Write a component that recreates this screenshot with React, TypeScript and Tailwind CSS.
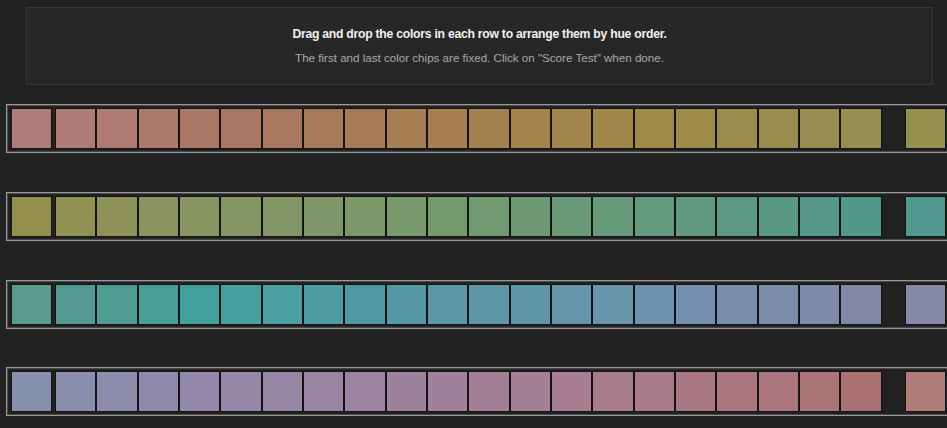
import React from "react";

type Anchor = [number, string];

function hexToRgb(h: string): [number, number, number] {
  const v = h.replace("#", "");
  return [parseInt(v.slice(0, 2), 16), parseInt(v.slice(2, 4), 16), parseInt(v.slice(4, 6), 16)];
}

function interp(anchors: Anchor[], n = 22): string[] {
  const out: string[] = [];
  for (let i = 0; i < n; i++) {
    let a = anchors[0];
    let b = anchors[anchors.length - 1];
    for (let k = 0; k < anchors.length - 1; k++) {
      if (i >= anchors[k][0] && i <= anchors[k + 1][0]) {
        a = anchors[k];
        b = anchors[k + 1];
        break;
      }
    }
    const t = b[0] === a[0] ? 0 : (i - a[0]) / (b[0] - a[0]);
    const ca = hexToRgb(a[1]);
    const cb = hexToRgb(b[1]);
    const c = ca.map((x, j) => Math.round(x + (cb[j] - x) * t));
    out.push(`rgb(${c[0]}, ${c[1]}, ${c[2]})`);
  }
  return out;
}

const rows: string[][] = [
  interp([
    [0, "#b07c7b"],
    [5, "#aa7762"],
    [10, "#a67e51"],
    [15, "#a08a48"],
    [20, "#968e52"],
    [21, "#939050"],
  ]),
  interp([
    [0, "#938f4c"],
    [3, "#8a9460"],
    [6, "#839666"],
    [10, "#749a6c"],
    [14, "#66997a"],
    [18, "#5a9886"],
    [20, "#529888"],
    [21, "#539890"],
  ]),
  interp([
    [0, "#5a9b90"],
    [1, "#539a90"],
    [4, "#44a09c"],
    [6, "#4c9ea2"],
    [8, "#5098a4"],
    [10, "#5896a8"],
    [12, "#6096a8"],
    [14, "#6894ac"],
    [16, "#7490ae"],
    [18, "#7c8cac"],
    [20, "#8088a6"],
    [21, "#8688a8"],
  ]),
  interp([
    [0, "#8890b0"],
    [1, "#8a8eae"],
    [4, "#9288aa"],
    [7, "#9a84a4"],
    [10, "#a0809a"],
    [13, "#a87e90"],
    [16, "#aa7884"],
    [19, "#aa7478"],
    [20, "#aa7272"],
    [21, "#b07c78"],
  ]),
];

function Chip({ color }: { color: string }) {
  return (
    <div
      className="w-[41.33px] h-[41px] shrink-0 border border-[#141414] box-border"
      style={{ backgroundColor: color }}
    />
  );
}

function Row({ colors }: { colors: string[] }) {
  const first = colors[0];
  const last = colors[colors.length - 1];
  const middle = colors.slice(1, -1);
  return (
    <div className="ml-[6px] w-[960px] shrink-0 border border-[#9a9a9a] shadow-[inset_0_0_0_1px_#4a4a4a] pl-[3.7px] pt-[3px] pb-[3px] flex flex-row items-start bg-[#212121]">
      <Chip color={first} />
      <div className="flex flex-row ml-[3px]">
        {middle.map((c, i) => (
          <Chip key={i} color={c} />
        ))}
      </div>
      <div className="ml-[23.4px]">
        <Chip color={last} />
      </div>
    </div>
  );
}

export default function App() {
  return (
    <div className="w-full min-h-screen overflow-hidden bg-[#222222] pt-[7px]" style={{ fontFamily: "'Liberation Sans', Arial, sans-serif" }}>
      <div className="ml-[26px] w-[907px] h-[78px] border border-[#363636] bg-[#272727] flex flex-col items-center">
        <div className="mt-[18px] text-[12.2px] leading-[16px] font-bold text-[#f2f2f2] tracking-[-0.25px]">
          Drag and drop the colors in each row to arrange them by hue order.
        </div>
        <div className="mt-[8px] text-[11.6px] leading-[16px] text-[#a9a9a9]">
          The first and last color chips are fixed. Click on "Score Test" when done.
        </div>
      </div>
      <div className="flex flex-col mt-[19px] gap-[38.8px]">
        {rows.map((r, i) => (
          <Row key={i} colors={r} />
        ))}
      </div>
    </div>
  );
}
